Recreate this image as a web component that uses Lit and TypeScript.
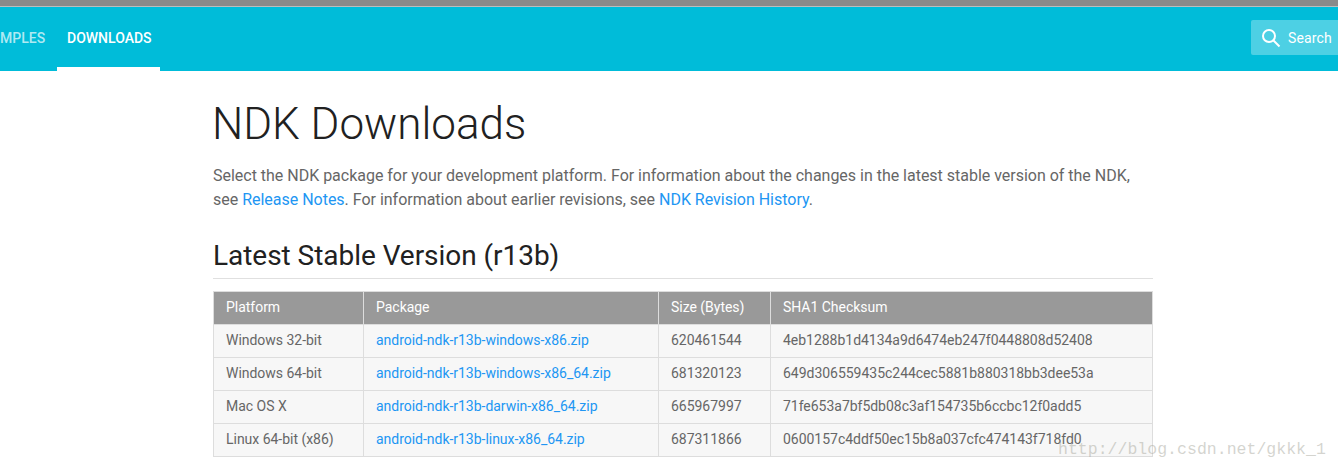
import { LitElement, html, css } from "lit";
import { customElement } from "lit/decorators.js";

const rows = [
  ["Windows 32-bit", "android-ndk-r13b-windows-x86.zip", "620461544", "4eb1288b1d4134a9d6474eb247f0448808d52408"],
  ["Windows 64-bit", "android-ndk-r13b-windows-x86_64.zip", "681320123", "649d306559435c244cec5881b880318bb3dee53a"],
  ["Mac OS X", "android-ndk-r13b-darwin-x86_64.zip", "665967997", "71fe653a7bf5db08c3af154735b6ccbc12f0add5"],
  ["Linux 64-bit (x86)", "android-ndk-r13b-linux-x86_64.zip", "687311866", "0600157c4ddf50ec15b8a037cfc474143f718fd0"],
];

@customElement("app-root")
export class AppRoot extends LitElement {
  static styles = css`
    :host { display: block; position: relative; height: 470px; overflow: hidden; background: #fff; font-family: Roboto, sans-serif; color: #444; }
    .strip { height: 6px; background: #8a8a8a; border-bottom: 1px solid #bdbdbd; }
    .bar { height: 64px; background: #00bcd9; display: flex; align-items: stretch; justify-content: space-between; overflow: hidden; }
    .nav { display: flex; align-items: stretch; }
    .tab { font-size: 14px; font-weight: 500; line-height: 62px; height: 60px; }
    .samples { color: rgba(255,255,255,.7); width: 57px; }
    .samples span { display: block; white-space: nowrap; }
    .dl { color: #fff; padding: 0 8px 0 10px; width: 85px; box-sizing: content-box; border-bottom: 4px solid #fff; white-space: nowrap; }
    .search { margin-top: 13px; width: 87px; height: 35px; background: rgba(255,255,255,.3); border-radius: 2px 0 0 2px; display: flex; align-items: center; gap: 7px; padding-left: 10px; box-sizing: border-box; color: #fff; font-size: 14px; letter-spacing: .15px; white-space: nowrap; }
    .search svg { display: block; flex: none; }
    main { margin-left: 213px; width: 940px; }
    h1 { margin: 27px 0 0 -1px; font-size: 44px; line-height: 52px; font-weight: 300; color: #212121; }
    p { margin: 14px 0 0; font-size: 16px; line-height: 24px; font-weight: 400; letter-spacing: -.015px; color: #666; width: 930px; }
    a { color: #2196f3; text-decoration: none; }
    h2 { margin: 26px 0 0; padding-bottom: 4px; font-size: 28px; line-height: 36px; font-weight: 400; letter-spacing: -.04px; color: #212121; border-bottom: 1px solid #e0e0e0; }
    table { margin-top: 12px; border-collapse: collapse; width: 940px; table-layout: fixed; font-size: 14px; font-weight: 400; letter-spacing: -.025px; color: #666; }
    th, td { border: 1px solid #ddd; padding: 0 12px 2px; height: 33px; box-sizing: border-box; text-align: left; }
    th { background: #999; color: #fff; font-weight: 400; }
    td { background: #f7f7f7; }
    .wm { position: absolute; left: 1058px; top: 438px; font-family: "Liberation Mono", monospace; font-size: 16.55px; line-height: 24px; color: rgba(170,170,160,.5); white-space: nowrap; }
  `;

  render() {
    return html`
      <div class="strip"></div>
      <header class="bar">
        <nav class="nav">
          <div class="tab samples"><span>MPLES</span></div>
          <div class="tab dl">DOWNLOADS</div>
        </nav>
        <div class="search">
          <svg width="20" height="20" viewBox="0 0 20 20" fill="none" stroke="#fff" stroke-width="2"><circle cx="8" cy="8" r="6"></circle><path d="M12.5 12.5 L18.5 18.5"></path></svg>
          <span>Search</span>
        </div>
      </header>
      <main>
        <h1>NDK Downloads</h1>
        <p>Select the NDK package for your development platform. For information about the changes in the latest stable version of the NDK, see <a>Release Notes</a>. For information about earlier revisions, see <a>NDK Revision History</a>.</p>
        <h2>Latest Stable Version (r13b)</h2>
        <table>
          <colgroup><col style="width:150px"><col style="width:295px"><col style="width:112px"><col></colgroup>
          <thead><tr><th>Platform</th><th>Package</th><th>Size (Bytes)</th><th>SHA1 Checksum</th></tr></thead>
          <tbody>
            ${rows.map(r => html`<tr><td>${r[0]}</td><td><a>${r[1]}</a></td><td>${r[2]}</td><td>${r[3]}</td></tr>`)}
          </tbody>
        </table>
      </main>
      <div class="wm">http://blog.csdn.net/gkkk_1</div>
    `;
  }
}
